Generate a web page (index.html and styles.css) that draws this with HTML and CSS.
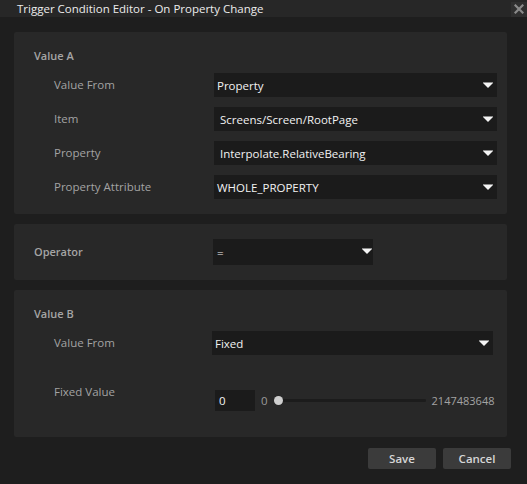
FILE: index.html
```html
<!DOCTYPE html>
<html>
<head>
<meta charset="utf-8">
<link rel="stylesheet" href="styles.css">
</head>
<body>
<div class="titlebar">
  <span class="title">Trigger Condition Editor - On Property Change</span>
  <span class="close"><svg width="10" height="10" viewBox="0 0 10 10"><path d="M1.5 1.5 L8.5 8.5 M8.5 1.5 L1.5 8.5" stroke="#8a8a8a" stroke-width="2.2" stroke-linecap="square"/></svg></span>
</div>
<div class="content">
  <section class="panel panel-a">
    <div class="header">Value A</div>
    <div class="rows">
      <div class="label">Value From</div>
      <div class="select"><span>Property</span><i class="arrow"></i></div>
      <div class="label">Item</div>
      <div class="select ind"><span>Screens/Screen/RootPage</span><i class="arrow"></i></div>
      <div class="label">Property</div>
      <div class="select ind"><span>Interpolate.RelativeBearing</span><i class="arrow"></i></div>
      <div class="label">Property Attribute</div>
      <div class="select"><span>WHOLE_PROPERTY</span><i class="arrow"></i></div>
    </div>
  </section>
  <section class="panel panel-op">
    <div class="header op-label">Operator</div>
    <div class="select op-select"><span>=</span><i class="arrow"></i></div>
  </section>
  <section class="panel panel-b">
    <div class="header">Value B</div>
    <div class="rows rows-b">
      <div class="label">Value From</div>
      <div class="select"><span>Fixed</span><i class="arrow"></i></div>
    </div>
    <div class="fixed-row">
      <div class="label fixed-label">Fixed Value</div>
      <div class="slider-group">
        <div class="num-input">0</div>
        <span class="range-min">0</span>
        <div class="track"><span class="thumb"></span></div>
        <span class="range-max">2147483648</span>
      </div>
    </div>
  </section>
  <div class="buttons">
    <button class="btn">Save</button>
    <button class="btn">Cancel</button>
  </div>
</div>
</body>
</html>
```
FILE: styles.css
```css
html, body {
  margin: 0;
  padding: 0;
  background: #1e1e1e;
  font-family: "Open Sans", "Noto Sans", sans-serif;
  font-size: 11.5px;
  color: #a8a8a8;
}
.titlebar {
  height: 17px;
  background: #272727;
  display: flex;
  align-items: center;
  justify-content: space-between;
}
.title {
  padding-left: 17px;
  color: #ececec;
  font-size: 11.5px;
  line-height: 17px;
}
.close {
  width: 16px;
  height: 15px;
  margin-top: 1px;
  background: #2f2f2f;
  display: flex;
  align-items: center;
  justify-content: center;
}
.content {
  padding: 15px 20px 0 14px;
  display: flex;
  flex-direction: column;
  gap: 10px;
}
.panel {
  background: #282828;
  border-radius: 2px;
}
.panel-a {
  padding: 16px 10px 15px 20px;
}
.header {
  font-weight: 600;
  font-size: 11px;
  height: 16px;
  line-height: 16px;
  color: #a5a5a5;
}
.rows {
  margin-top: 9px;
  display: grid;
  grid-template-columns: 160px 1fr;
  row-gap: 10px;
  padding-left: 20px;
}
.label {
  height: 24px;
  line-height: 24px;
  color: #a3a3a3;
}
.select {
  height: 24px;
  background: #1b1b1b;
  color: #f2f2f2;
  display: flex;
  align-items: center;
  justify-content: space-between;
  padding: 0 4px 0 3px;
}
.select.ind { padding-left: 6px; }
.arrow {
  width: 0;
  height: 0;
  border-left: 5px solid transparent;
  border-right: 5px solid transparent;
  border-top: 5px solid #f4f4f4;
  box-shadow: 0 -1px 0 #8a8a8a;
}
.panel-op {
  padding: 15px 0 15px 20px;
  display: flex;
  align-items: center;
}
.op-label {
  width: 179px;
}
.op-select {
  width: 160px;
  height: 26px;
  box-sizing: border-box;
  padding-right: 1px;
  align-items: flex-start;
}
.op-select span { line-height: 28px; padding-left: 1px; }
.op-select .arrow { margin-top: 10px; }
.panel-b {
  padding: 16px 14px 26px 20px;
}
.rows-b {
  grid-template-columns: 158px 1fr;
}
.fixed-row {
  margin-top: 26px;
  padding-left: 20px;
  display: grid;
  grid-template-columns: 161px 1fr;
  height: 30px;
}
.fixed-label {
  height: 22px;
  line-height: 22px;
}
.slider-group {
  align-self: end;
  display: flex;
  align-items: center;
  height: 21px;
}
.num-input {
  width: 40px;
  height: 21px;
  box-sizing: border-box;
  padding-left: 4px;
  background: #1b1b1b;
  color: #f4f4f4;
  line-height: 21px;
}
.range-min {
  margin-left: 6px;
  color: #9a9a9a;
}
.track {
  position: relative;
  width: 148px;
  height: 3px;
  background: #1c1c1c;
  margin-left: 10px;
  border-radius: 1px;
}
.thumb {
  position: absolute;
  left: -4px;
  top: -3px;
  width: 9px;
  height: 9px;
  border-radius: 50%;
  background: #cfcfcf;
}
.range-max {
  margin-left: 6px;
  color: #a3a3a3;
  font-size: 11px;
}
.buttons {
  display: flex;
  justify-content: flex-end;
  gap: 7px;
  margin-top: 1px;
  margin-right: -4px;
}
.btn {
  width: 68px;
  height: 21px;
  border: none;
  border-radius: 2px;
  background: #3b3b3b;
  color: #d6d6d6;
  font-family: inherit;
  font-size: 11.5px;
  font-weight: 600;
  padding: 0;
}
```
